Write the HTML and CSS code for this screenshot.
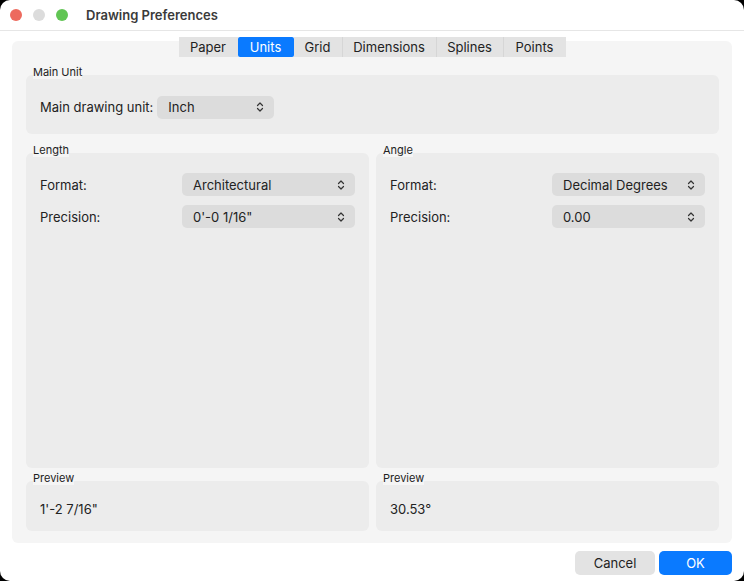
FILE: index.html
```html
<!DOCTYPE html>
<html lang="en">
<head>
  <meta charset="UTF-8">
  <title>Drawing Preferences</title>
  <link rel="stylesheet" href="styles.css">
</head>
<body>
<div class="window">
  <div class="titlebar">
    <span class="light red"></span>
    <span class="light gray"></span>
    <span class="light green"></span>
    <span class="title">Drawing Preferences</span>
  </div>

  <div class="content">
    <div class="tabs">
      <span class="tab">Paper</span>
      <span class="tab active">Units</span>
      <span class="tab">Grid</span>
      <span class="tab">Dimensions</span>
      <span class="tab">Splines</span>
      <span class="tab">Points</span>
    </div>

    <div class="panel">
      <div class="group">
        <div class="caption"><span>Main Unit</span></div>
        <div class="box main-box">
          <span class="label">Main drawing unit:</span>
          <span class="popup popup-unit">Inch <svg class="arrows" viewBox="0 0 8 12"><path d="M1.5 4.5 4 2l2.5 2.5M1.5 7.5 4 10l2.5-2.5"/></svg></span>
        </div>
      </div>

      <div class="columns">
        <div class="group col">
          <div class="caption"><span>Length</span></div>
          <div class="box rows-box">
            <div class="row">
              <span class="label">Format:</span>
              <span class="popup popup-len">Architectural <svg class="arrows" viewBox="0 0 8 12"><path d="M1.5 4.5 4 2l2.5 2.5M1.5 7.5 4 10l2.5-2.5"/></svg></span>
            </div>
            <div class="row">
              <span class="label">Precision:</span>
              <span class="popup popup-len">0'-0 1/16" <svg class="arrows" viewBox="0 0 8 12"><path d="M1.5 4.5 4 2l2.5 2.5M1.5 7.5 4 10l2.5-2.5"/></svg></span>
            </div>
          </div>
        </div>
        <div class="group col">
          <div class="caption"><span>Angle</span></div>
          <div class="box rows-box">
            <div class="row">
              <span class="label">Format:</span>
              <span class="popup popup-ang">Decimal Degrees <svg class="arrows" viewBox="0 0 8 12"><path d="M1.5 4.5 4 2l2.5 2.5M1.5 7.5 4 10l2.5-2.5"/></svg></span>
            </div>
            <div class="row">
              <span class="label">Precision:</span>
              <span class="popup popup-ang">0.00 <svg class="arrows" viewBox="0 0 8 12"><path d="M1.5 4.5 4 2l2.5 2.5M1.5 7.5 4 10l2.5-2.5"/></svg></span>
            </div>
          </div>
        </div>
      </div>

      <div class="columns">
        <div class="group col">
          <div class="caption"><span>Preview</span></div>
          <div class="box preview">1'-2 7/16"</div>
        </div>
        <div class="group col">
          <div class="caption"><span>Preview</span></div>
          <div class="box preview">30.53°</div>
        </div>
      </div>
    </div>

    <div class="buttons">
      <span class="btn">Cancel</span>
      <span class="btn primary">OK</span>
    </div>
  </div>
</div>
</body>
</html>
```

FILE: styles.css
```css
html, body {
  margin: 0;
  padding: 0;
  background: #000;
}
body {
  font-family: Inter, "Noto Sans", sans-serif;
  font-size: 13px;
  color: #222;
}
.window {
  width: 744px;
  height: 581px;
  background: #fff;
  border-radius: 10px;
  overflow: hidden;
}
.titlebar {
  height: 31px;
  display: flex;
  align-items: center;
  padding-left: 10px;
  border-bottom: 1px solid #e6e6e6;
  box-sizing: border-box;
}
.light {
  width: 12px;
  height: 12px;
  border-radius: 50%;
  margin-right: 11px;
}
.red { background: #ed6a5e; }
.gray { background: #dcdcdc; }
.green { background: #61c554; }
.title {
  margin-left: 7px;
  font-weight: 600;
  font-size: 13px;
  color: #3a3a3a;
}
.content {
  padding: 10px 12px 0 12px;
}
.tabs {
  display: flex;
  justify-content: center;
  height: 20px;
  margin: -4px 0 -16px 0;
  position: relative;
  z-index: 1;
}
.tab {
  height: 20px;
  line-height: 20px;
  background: #e3e3e3;
  border-left: 1px solid #d6d6d6;
  font-size: 13px;
  color: #222;
  text-align: center;
}
.tab:first-child { border-left: none; }
.tabs .tab:nth-child(1) { width: 59px; }
.tabs .tab:nth-child(2) { width: 56px; }
.tabs .tab:nth-child(3) { width: 48px; }
.tabs .tab:nth-child(4) { width: 93px; }
.tabs .tab:nth-child(5) { width: 66px; }
.tabs .tab:nth-child(6) { width: 62px; }
.tab.active {
  background: #0a7aff;
  color: #fff;
  border-left: none;
  border-radius: 2px;
}
.tab.active + .tab { border-left: none; }
.panel {
  background: #f5f5f5;
  border-radius: 6px;
  height: 502px;
  box-sizing: border-box;
  padding: 21px 13px 0 14px;
}
.caption {
  height: 13px;
  font-size: 11px;
  line-height: 20px;
  color: #222;
  padding-left: 7px;
}
.caption span {
  background: #f5f5f5;
  position: relative;
}
.box {
  background: #ececec;
  border-radius: 6px;
}
.main-box {
  height: 59px;
  display: flex;
  align-items: center;
  padding: 5px 0 0 14px;
  box-sizing: border-box;
  margin-bottom: 6px;
}
.main-box .label { margin-right: 4px; }
.popup {
  display: flex;
  align-items: center;
  justify-content: space-between;
  height: 23px;
  background: #dcdcdc;
  border-radius: 5px;
  padding: 0 10px 0 11px;
  box-sizing: border-box;
  font-size: 13px;
}
.popup-unit { width: 117px; }
.popup-len { width: 173px; }
.popup-ang { width: 153px; }
.arrows {
  width: 8px;
  height: 12px;
  fill: none;
  stroke: #333;
  stroke-width: 1.2;
  stroke-linecap: round;
  stroke-linejoin: round;
}
.columns {
  display: flex;
  gap: 7px;
}
.col { flex: 1; }
.rows-box {
  height: 315px;
  padding: 20px 14px 0 14px;
  box-sizing: border-box;
}
.row {
  display: flex;
  justify-content: space-between;
  align-items: center;
  margin-bottom: 9px;
}
.preview {
  height: 50px;
  display: flex;
  align-items: center;
  padding: 5px 0 0 14px;
  box-sizing: border-box;
}
.buttons {
  display: flex;
  justify-content: flex-end;
  gap: 4px;
  margin-top: 8px;
}
.btn {
  height: 24px;
  line-height: 24px;
  border-radius: 5px;
  background: #e3e3e3;
  text-align: center;
  width: 80px;
  font-size: 13px;
}
.btn.primary {
  width: 73px;
  background: #0a7aff;
  color: #fff;
}
```
